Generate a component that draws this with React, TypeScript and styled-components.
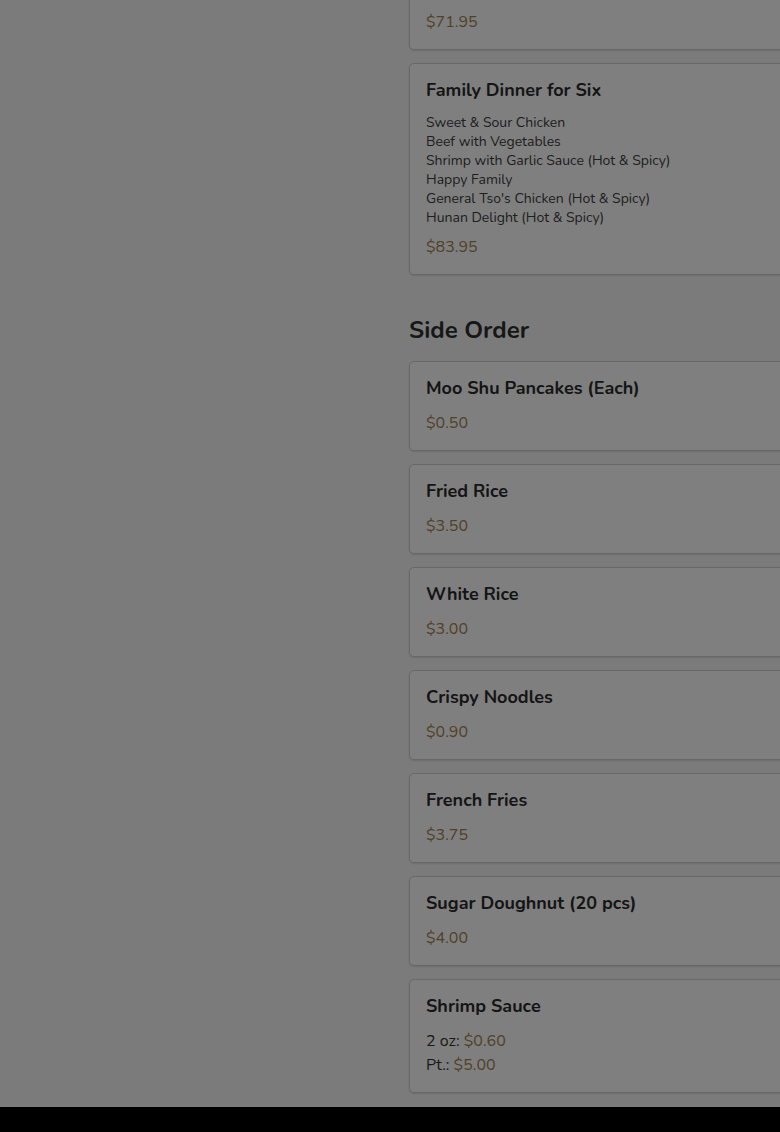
import React from 'react'
import styled, { createGlobalStyle } from 'styled-components'

const GlobalStyle = createGlobalStyle`
  html, body {
    margin: 0;
    padding: 0;
    height: 1132px;
    overflow: hidden;
    background: #f7f7f7;
  }
  body {
    font-family: 'Nunito', 'Lato', 'Noto Sans', sans-serif;
    color: #333333;
  }
  * {
    box-sizing: border-box;
  }
`

const Page = styled.div`
  display: grid;
  grid-template-columns: 393px 460px;
  column-gap: 16px;
  min-height: 1107px;
`

const Aside = styled.div``

// the menu is scrolled part way down, so the first card is partly above the fold
const MenuColumn = styled.main`
  margin-top: -143px;
  display: flex;
  flex-direction: column;
`

const Section = styled.section`
  display: flex;
  flex-direction: column;
  gap: 13px;
`

const SectionTitle = styled.h2`
  margin: 40px 0 16px;
  font-size: 24px;
  line-height: 30px;
  font-weight: 700;
  color: #2e2e2e;
`

const Card = styled.article`
  background: #ffffff;
  border: 1px solid #cfcfcf;
  border-radius: 5px;
  box-shadow: 0 1px 2px rgba(0, 0, 0, 0.12);
  padding: 15px 16px;
`

const ItemName = styled.h3`
  margin: 0 0 12px;
  font-size: 18px;
  line-height: 22px;
  font-weight: 700;
  color: #2b2b2b;
`

const Contents = styled.ul`
  list-style: none;
  margin: 0 0 8px;
  padding: 0;
  font-size: 14px;
  line-height: 19px;
  color: #3c3c3c;
`

const PriceRow = styled.div`
  font-size: 16px;
  line-height: 24px;
  color: #333333;
`

const Price = styled.span`
  color: #a2824f;
`

const BottomBar = styled.div`
  position: fixed;
  left: 0;
  right: 0;
  bottom: 0;
  height: 25px;
  background: #000000;
  z-index: 20;
`

const Dim = styled.div`
  position: fixed;
  inset: 0;
  background: rgba(0, 0, 0, 0.5);
  z-index: 10;
`

type MenuItem = {
  name: string
  items?: string[]
  prices: { label?: string; value: string }[]
}

const dinners: MenuItem[] = [
  {
    name: 'Family Dinner for Five',
    items: [
      'Sweet & Sour Chicken',
      'Beef with Broccoli',
      'Shrimp with Lobster Sauce',
      'Happy Family',
      "General Tso's Chicken (Hot & Spicy)"
    ],
    prices: [{ value: '$71.95' }]
  },
  {
    name: 'Family Dinner for Six',
    items: [
      'Sweet & Sour Chicken',
      'Beef with Vegetables',
      'Shrimp with Garlic Sauce (Hot & Spicy)',
      'Happy Family',
      "General Tso's Chicken (Hot & Spicy)",
      'Hunan Delight (Hot & Spicy)'
    ],
    prices: [{ value: '$83.95' }]
  }
]

const sides: MenuItem[] = [
  { name: 'Moo Shu Pancakes (Each)', prices: [{ value: '$0.50' }] },
  { name: 'Fried Rice', prices: [{ value: '$3.50' }] },
  { name: 'White Rice', prices: [{ value: '$3.00' }] },
  { name: 'Crispy Noodles', prices: [{ value: '$0.90' }] },
  { name: 'French Fries', prices: [{ value: '$3.75' }] },
  { name: 'Sugar Doughnut (20 pcs)', prices: [{ value: '$4.00' }] },
  {
    name: 'Shrimp Sauce',
    prices: [
      { label: '2 oz:', value: '$0.60' },
      { label: 'Pt.:', value: '$5.00' }
    ]
  }
]

const MenuCard = ({ item }: { item: MenuItem }) => (
  <Card>
    <ItemName>{item.name}</ItemName>
    {item.items && (
      <Contents>
        {item.items.map((line) => (
          <li key={line}>{line}</li>
        ))}
      </Contents>
    )}
    {item.prices.map((p) => (
      <PriceRow key={p.value}>
        {p.label && <>{p.label} </>}
        <Price>{p.value}</Price>
      </PriceRow>
    ))}
  </Card>
)

export default function App() {
  return (
    <>
      <GlobalStyle />
      <Page>
        <Aside />
        <MenuColumn>
          <Section>
            {dinners.map((d) => (
              <MenuCard key={d.name} item={d} />
            ))}
          </Section>
          <SectionTitle>Side Order</SectionTitle>
          <Section>
            {sides.map((s) => (
              <MenuCard key={s.name} item={s} />
            ))}
          </Section>
        </MenuColumn>
      </Page>
      <Dim />
      <BottomBar />
    </>
  )
}
